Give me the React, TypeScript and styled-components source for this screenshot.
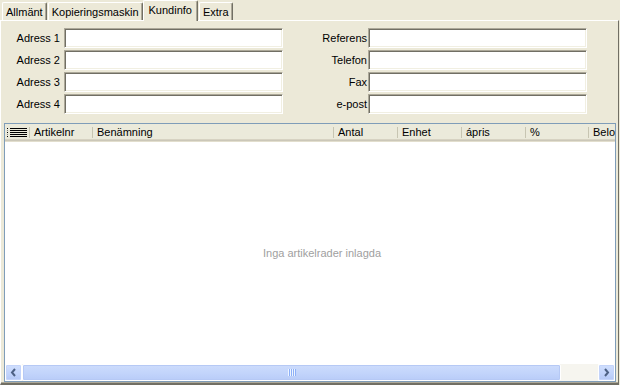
import React from "react";
import styled, { createGlobalStyle } from "styled-components";

const GlobalStyle = createGlobalStyle`
  html, body {
    margin: 0;
    padding: 0;
    background: #ece9d8;
  }
  body {
    font-family: "Liberation Sans", Arial, sans-serif;
    font-size: 11px;
    color: #000;
  }
`;

const SWindow = styled.div`
  width: 620px;
  height: 385px;
  display: flex;
  flex-direction: column;
  background: #ece9d8;
  overflow: hidden;
`;

const STabStrip = styled.div`
  height: 20px;
  display: flex;
  align-items: flex-end;
  padding-left: 2px;
  gap: 1px;
  position: relative;
  z-index: 1;
`;

const STab = styled.div<{ $active?: boolean }>`
  height: ${(p) => (p.$active ? "21px" : "18px")};
  margin-bottom: ${(p) => (p.$active ? "-1px" : "0")};
  margin-left: ${(p) => (p.$active ? "-1px" : "0")};
  padding: ${(p) => (p.$active ? "0 5px 0 5px" : "0 3px")};
  box-sizing: border-box;
  display: flex;
  align-items: ${(p) => (p.$active ? "flex-start" : "center")};
  padding-top: ${(p) => (p.$active ? "3px" : "0")};
  background: #ece9d8;
  border-top: 1px solid #fff;
  border-left: 1px solid #fff;
  border-right: 1px solid #716f64;
  box-shadow: inset -1px 0 #aca899;
  border-top-left-radius: 2px;
  border-top-right-radius: 2px;
  white-space: nowrap;
`;

const SPanel = styled.div`
  flex: 1;
  display: flex;
  flex-direction: column;
  width: 619px;
  box-sizing: border-box;
  border-top: 1px solid #fff;
  border-left: 1px solid #fff;
  border-right: 1px solid #716f64;
  border-bottom: 2px solid #716f64;
  box-shadow: inset 0 -1px #aca899;
  padding: 7px 2px 1px 3px;
`;

const SForm = styled.div`
  display: grid;
  grid-template-columns: 60px 219px 85px 219px;
  grid-auto-rows: 20px;
  row-gap: 2px;
`;

const SLabel = styled.label<{ $tight?: boolean }>`
  display: flex;
  align-items: center;
  justify-content: flex-end;
  padding-right: ${(p) => (p.$tight ? "1px" : "4px")};
  white-space: nowrap;
`;

const SInput = styled.input`
  width: 219px;
  height: 20px;
  box-sizing: border-box;
  margin: 0;
  padding: 1px 3px;
  border: 1px solid;
  border-color: #aca899 #fff #fff #aca899;
  box-shadow: inset 1px 1px #716f64, inset -1px -1px #f1efe2;
  background: #fff;
  font: inherit;
  outline: none;
`;

const SGrid = styled.div`
  flex: 1;
  margin-top: 9px;
  display: flex;
  flex-direction: column;
  border: 1px solid #7f9db9;
  background: #fff;
  overflow: hidden;
`;

const SHeader = styled.div`
  height: 18px;
  display: flex;
  flex-shrink: 0;
  background: #ebeadb;
  box-shadow: inset 0 -1px #e2decd, inset 0 -2px #cbc7b8, inset 0 -3px #d6d2c2;
  overflow: hidden;
`;

const SHeaderCell = styled.div<{ $width: number }>`
  flex: 0 0 ${(p) => p.$width}px;
  display: flex;
  align-items: center;
  padding: 0 0 2px 4px;
  box-sizing: border-box;
  white-space: nowrap;
  background: linear-gradient(#c7c5b2, #c7c5b2) no-repeat right 3px / 1px 11px;
`;

const SIndicatorCell = styled(SHeaderCell)`
  padding-left: 2px;
`;

const SBody = styled.div`
  flex: 1;
  display: flex;
  align-items: center;
  justify-content: center;
  padding-left: 24px;
  color: #a0a0a0;
`;

const SScrollBar = styled.div`
  height: 17px;
  display: flex;
  flex-shrink: 0;
  background: #fefefb;
`;

const SArrowButton = styled.div`
  flex: 0 0 17px;
  display: flex;
  align-items: center;
  justify-content: center;
  box-sizing: border-box;
  border: 1px solid #fff;
  border-radius: 2px;
  background: linear-gradient(#d0dffd, #c1d3fb 60%, #b4c8f6);
  box-shadow: inset 0 0 0 1px #c4d4fa;
`;

const STrack = styled.div`
  flex: 1;
  display: flex;
  background: #f6f5ef;
`;

const SThumb = styled.div`
  flex: 0 0 539px;
  display: flex;
  align-items: center;
  justify-content: center;
  box-sizing: border-box;
  border: 1px solid #fff;
  border-radius: 2px;
  background: linear-gradient(#cddcfc, #c3d5fb 50%, #b9ccf8);
  box-shadow: inset 0 0 0 1px #b6c9f5;
`;

const SGrip = styled.div`
  width: 8px;
  height: 7px;
  background: repeating-linear-gradient(
    to right,
    #eef4fe 0 1px,
    #8cb0f8 1px 2px
  );
`;

const columns = [
  { title: "Artikelnr", width: 63 },
  { title: "Benämning", width: 241 },
  { title: "Antal", width: 64 },
  { title: "Enhet", width: 64 },
  { title: "ápris", width: 64 },
  { title: "%", width: 63 },
  { title: "Belo", width: 80 },
];

const leftFields = ["Adress 1", "Adress 2", "Adress 3", "Adress 4"];
const rightFields = ["Referens", "Telefon", "Fax", "e-post"];

const RowsIcon = () => (
  <svg width="20" height="9" viewBox="0 0 20 9">
    {[0, 2, 4, 6, 8].map((y) => (
      <g key={y}>
        <rect x="0" y={y} width="1" height="1" fill={y % 4 === 0 ? "#000" : "#808080"} />
        <rect x="3" y={y} width="17" height="1" fill="#000" />
      </g>
    ))}
  </svg>
);

const Chevron = ({ dir }: { dir: "left" | "right" }) => (
  <svg width="7" height="9" viewBox="0 0 7 9">
    <path
      d={dir === "left" ? "M5 1 L2 4.5 L5 8" : "M2 1 L5 4.5 L2 8"}
      fill="none"
      stroke="#4d6185"
      strokeWidth="2"
    />
  </svg>
);

export default function App() {
  return (
    <>
      <GlobalStyle />
      <SWindow>
        <STabStrip>
          <STab>Allmänt</STab>
          <STab>Kopieringsmaskin</STab>
          <STab $active>Kundinfo</STab>
          <STab>Extra</STab>
        </STabStrip>

        <SPanel>
          <SForm>
            {leftFields.map((label, i) => (
              <React.Fragment key={label}>
                <SLabel>{label}</SLabel>
                <SInput defaultValue="" />
                <SLabel $tight>{rightFields[i]}</SLabel>
                <SInput defaultValue="" />
              </React.Fragment>
            ))}
          </SForm>

          <SGrid>
            <SHeader>
              <SIndicatorCell $width={25}>
                <RowsIcon />
              </SIndicatorCell>
              {columns.map((c) => (
                <SHeaderCell key={c.title} $width={c.width}>
                  {c.title}
                </SHeaderCell>
              ))}
            </SHeader>
            <SBody>Inga artikelrader inlagda</SBody>
            <SScrollBar>
              <SArrowButton>
                <Chevron dir="left" />
              </SArrowButton>
              <STrack>
                <SThumb>
                  <SGrip />
                </SThumb>
              </STrack>
              <SArrowButton>
                <Chevron dir="right" />
              </SArrowButton>
            </SScrollBar>
          </SGrid>
        </SPanel>
      </SWindow>
    </>
  );
}
